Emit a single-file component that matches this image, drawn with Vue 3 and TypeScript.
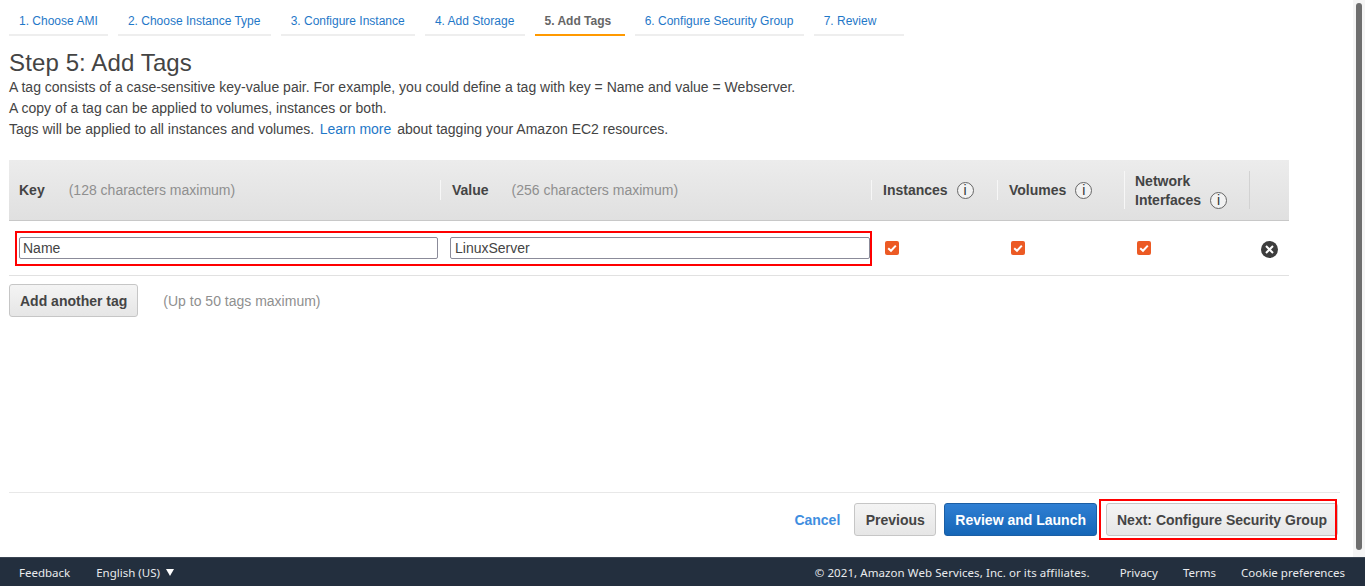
<script setup lang="ts">
const steps = [
  '1. Choose AMI',
  '2. Choose Instance Type',
  '3. Configure Instance',
  '4. Add Storage',
  '5. Add Tags',
  '6. Configure Security Group',
  '7. Review',
]
const activeStep = 4
const checks = ['instances', 'volumes', 'interfaces']
</script>

<template>
  <div class="page">
    <div class="body">
      <main class="main">
        <nav class="steps">
          <a v-for="(s, i) in steps" :key="s" class="step" :class="{ active: i === activeStep }">{{ s }}</a>
        </nav>

        <h1 class="title">Step 5: Add Tags</h1>
        <p class="line">A tag consists of a case-sensitive key-value pair. For example, you could define a tag with key = Name and value = Webserver.</p>
        <p class="line">A copy of a tag can be applied to volumes, instances or both.</p>
        <p class="line">Tags will be applied to all instances and volumes. <a class="link">Learn more</a> about tagging your Amazon EC2 resources.</p>

        <div class="table">
          <div class="thead">
            <div class="th key"><b>Key</b><span class="hint">(128 characters maximum)</span></div>
            <div class="th value"><b>Value</b><span class="hint">(256 characters maximum)</span></div>
            <div class="th chk"><b>Instances</b><i class="info">i</i></div>
            <div class="th chk vol"><b>Volumes</b><i class="info">i</i></div>
            <div class="th chk net"><b>Network<br />Interfaces<i class="info inline">i</i></b></div>
            <div class="th last"></div>
          </div>
          <div class="trow">
            <div class="fields">
              <input class="input key-input" value="Name" />
              <input class="input value-input" value="LinuxServer" />
            </div>
            <div v-for="c in checks" :key="c" class="cell">
              <span class="box">
                <svg width="14" height="14" viewBox="0 0 14 14">
                  <path d="M3.2 7.2 L6 9.8 L10.8 4.6" fill="none" stroke="#fff" stroke-width="2" />
                </svg>
              </span>
            </div>
            <div class="cell last-cell">
              <svg width="17" height="17" viewBox="0 0 17 17">
                <circle cx="8.5" cy="8.5" r="8.5" fill="#3d3d3d" />
                <path d="M5 5 L12 12 M12 5 L5 12" stroke="#fff" stroke-width="2" />
              </svg>
            </div>
          </div>
        </div>

        <div class="add-row">
          <button class="btn" type="button">Add another tag</button>
          <span class="hint">(Up to 50 tags maximum)</span>
        </div>

        <div class="actions">
          <a class="cancel">Cancel</a>
          <button class="btn prev" type="button">Previous</button>
          <button class="btn primary" type="button">Review and Launch</button>
          <div class="next-wrap">
            <button class="btn next" type="button">Next: Configure Security Group</button>
            <span class="next-mark"></span>
          </div>
        </div>
      </main>
      <div class="scroll"><div class="thumb"></div></div>
    </div>

    <footer class="footer">
      <span>Feedback</span>
      <span class="lang">English (US) <i class="caret"></i></span>
      <span class="copy">© 2021, Amazon Web Services, Inc. or its affiliates.</span>
      <span class="flink first">Privacy</span>
      <span class="flink">Terms</span>
      <span class="flink">Cookie preferences</span>
    </footer>
  </div>
</template>

<style>
html,
body {
  margin: 0;
  background: #fff;
}
</style>

<style scoped>
.page {
  height: 586px;
  display: flex;
  flex-direction: column;
  font-family: 'Liberation Sans', Arial, sans-serif;
  font-size: 14px;
  color: #444;
  overflow: hidden;
}
.body {
  flex: 1;
  display: flex;
  min-height: 0;
}
.main {
  flex: 1;
  min-width: 0;
  padding: 8px 13px 0 9px;
  display: flex;
  flex-direction: column;
}
.scroll {
  width: 12px;
  background: #f5f5f5;
  padding: 3px 3px 7px;
  box-sizing: border-box;
}
.thumb {
  width: 6px;
  height: 100%;
  background: #6e6e6e;
  border-radius: 3px;
}
.steps {
  display: flex;
  gap: 10px;
}
.step {
  padding: 0 10.2px 0 10px;
  min-width: 70px;
  height: 26px;
  line-height: 26px;
  font-size: 12px;
  color: #1f78c8;
  border-bottom: 2px solid #eee;
}
.step.active {
  color: #666;
  font-weight: 700;
  border-bottom-color: #ff9900;
}
.title {
  margin: 13px 0 0;
  font-size: 24px;
  line-height: 28px;
  font-weight: 400;
  letter-spacing: 0.12px;
  color: #444;
}
.line {
  margin: 0;
  line-height: 21px;
  letter-spacing: 0.004px;
}
.link {
  color: #1f78c8;
  margin: 0 2px 0 1.5px;
}
.table {
  margin-top: 20px;
  width: 1280px;
  border-bottom: 1px solid #e1e1e1;
}
.thead {
  display: flex;
  height: 61px;
  box-sizing: border-box;
  background: linear-gradient(#ececec, #e0e0e0);
  border-bottom: 1px solid #c8c8c8;
  align-items: center;
}
.th {
  box-sizing: border-box;
  display: flex;
  align-items: center;
  height: 20px;
  border-right: 1px solid #f7f7f7;
  padding-left: 10px;
}
.th b {
  color: #444;
}
.th.key {
  width: 432px;
}
.th.value {
  width: 431px;
  padding-left: 11px;
}
.th.value .hint {
  margin-left: 23px;
}
.th.chk {
  width: 126px;
  padding-left: 11px;
}
.th.vol {
  border-right: 0;
}
.th.net {
  height: 38px;
  line-height: 19px;
  padding-left: 10px;
  padding-top: 2px;
  border-left: 1px solid #f7f7f7;
  border-right-color: #d2d2d2;
}
.th.last {
  border: 0;
  flex: 1;
}
.hint {
  color: #8f8f8f;
  margin-left: 24px;
}
.info {
  display: inline-block;
  box-sizing: border-box;
  width: 17px;
  height: 17px;
  margin-left: 9px;
  border: 1px solid #666;
  border-radius: 50%;
  font: 400 14px/15px 'Liberation Sans', Arial, sans-serif;
  text-align: center;
  color: #333;
  background: #f2f2f2;
}
.info.inline {
  vertical-align: 0;
}
.trow {
  display: flex;
  height: 54px;
  align-items: flex-start;
}
.fields {
  box-sizing: border-box;
  width: 857px;
  height: 35px;
  margin: 10px 0 0 6px;
  border: 2px solid #f00;
  display: flex;
  padding: 4px 0 0 2px;
  gap: 12px;
}
.input {
  box-sizing: border-box;
  height: 22px;
  border: 1px solid #8b8b99;
  border-radius: 2px;
  padding: 0 3px;
  font: 14px 'Liberation Sans', Arial, sans-serif;
  color: #444;
  outline: none;
  background: #fff;
}
.key-input {
  width: 419px;
}
.value-input {
  width: 420px;
  padding-left: 4px;
}
.cell {
  width: 126px;
  box-sizing: border-box;
  padding: 20px 0 0 13px;
}
.box {
  display: block;
  width: 14px;
  height: 14px;
  border-radius: 2px;
  background: #ec5a24;
}
.box svg,
.last-cell svg {
  display: block;
}
.last-cell {
  width: auto;
  padding: 20px 0 0 11px;
}
.add-row {
  display: flex;
  align-items: center;
  margin-top: 8px;
}
.add-row .hint {
  margin-left: 25px;
}
.btn {
  box-sizing: border-box;
  height: 33px;
  padding: 0 10px;
  border: 1px solid #c6c6c6;
  border-radius: 3px;
  background: linear-gradient(#f4f4f4, #e6e6e6);
  font: 700 14px 'Liberation Sans', Arial, sans-serif;
  color: #444;
  white-space: nowrap;
}
.prev {
  width: 82px;
}
.primary {
  color: #fff;
  background: linear-gradient(#2f7fd3, #1566b7);
  border-color: #1b5ea4;
}
.actions {
  margin-top: auto;
  margin-bottom: 21px;
  padding-top: 10px;
  border-top: 1px solid #e8e8e8;
  width: 1331px;
  display: flex;
  align-items: center;
  justify-content: flex-end;
  gap: 8px;
}
.cancel {
  color: #3f8ee0;
  font-weight: 700;
  margin-right: 6px;
}
.next-wrap {
  position: relative;
  margin-left: 1px;
  margin-right: 2px;
}
.next {
  display: block;
  width: 232px;
}
.next-mark {
  position: absolute;
  left: -7px;
  top: -4px;
  width: 238px;
  height: 41px;
  box-sizing: border-box;
  border: 2px solid #f00;
}
.footer {
  height: 29px;
  flex: none;
  background: #232f3e;
  border-top: 1px solid #3a4553;
  box-sizing: border-box;
  display: flex;
  align-items: center;
  padding: 1px 20px 0 19px;
  font: 11.5px 'Noto Sans', sans-serif;
  color: #e9ebed;
}
.lang {
  margin-left: 26px;
}
.caret {
  display: inline-block;
  width: 0;
  height: 0;
  margin-left: 3px;
  vertical-align: 1px;
  border: 4.5px solid transparent;
  border-top: 7px solid #fff;
  border-bottom: 0;
}
.copy {
  margin-left: auto;
  letter-spacing: 0.08px;
}
.flink {
  margin-left: 25px;
}
.flink.first {
  margin-left: 30px;
}
</style>
